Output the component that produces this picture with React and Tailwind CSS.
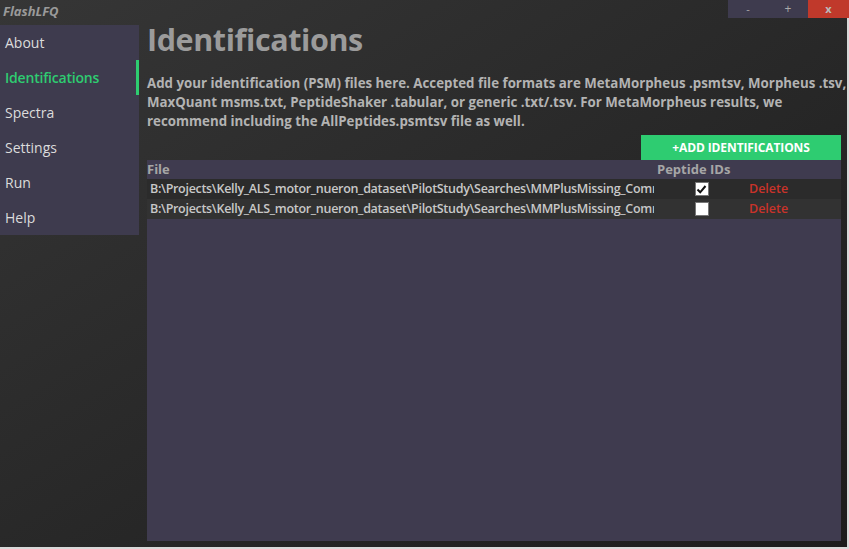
import React from 'react';

const navItems = ['About', 'Identifications', 'Spectra', 'Settings', 'Run', 'Help'];

const files = [
  { path: 'B:\\Projects\\Kelly_ALS_motor_nueron_dataset\\PilotStudy\\Searches\\MMPlusMissing_CommonFixedVariable\\AllPSMs.psmtsv', peptides: true },
  { path: 'B:\\Projects\\Kelly_ALS_motor_nueron_dataset\\PilotStudy\\Searches\\MMPlusMissing_CommonFixedVariable\\AllPeptides.psmtsv', peptides: false },
];

const Checkbox = ({ checked }) => (
  <div className="w-[14px] h-[14px] bg-white border border-[#777] flex items-center justify-center">
    {checked && (
      <svg width="11" height="11" viewBox="0 0 11 11">
        <path d="M1.5 5.5 L4.2 8.3 L9.5 2" fill="none" stroke="#111" strokeWidth="2" />
      </svg>
    )}
  </div>
);

export default function App() {
  return (
    <div className="w-[849px] h-[549px] bg-[#d9d9d9] font-['Open_Sans',sans-serif]">
      <div className="w-[847px] h-[547px] bg-gradient-to-br from-[#363636] to-[#1c1c1c] flex flex-col">
        {/* title bar */}
        <div className="h-[25px] flex items-start justify-between">
          <div className="pl-[3px] pt-[3px] text-[13px] leading-[17px] font-bold italic text-[#9a9a9a]">FlashLFQ</div>
          <div className="flex h-[18px] mr-[-2px]">
            <div className="w-[40px] bg-[#3e3b4e] text-[#aaa] text-[11px] flex items-center justify-center">-</div>
            <div className="w-[40px] bg-[#3e3b4e] text-[#aaa] text-[12px] flex items-center justify-center">+</div>
            <div className="w-[41px] bg-[#c0392b] text-[#bbb] text-[11px] font-bold flex items-center justify-center">x</div>
          </div>
        </div>

        <div className="flex flex-1 min-h-0">
          {/* sidebar */}
          <div className="w-[139px] self-start h-[210px] bg-[#3e3b4e] flex flex-col">
            {navItems.map((item) => {
              const active = item === 'Identifications';
              return (
                <div
                  key={item}
                  className={`h-[35px] flex items-center pl-[5px] text-[14px] ${
                    active ? 'text-[#2ecc71] font-semibold border-r-[3px] border-[#2ecc71] tracking-[-0.2px]' : 'text-[#dcdcdc]'
                  }`}
                >
                  {item}
                </div>
              );
            })}
          </div>

          {/* main */}
          <div className="flex-1 pl-[8px] pr-[6px] pb-[6px] flex flex-col min-w-0">
            <h1 className="text-[30.5px] leading-[28px] font-bold text-[#9b9b9b] tracking-[-0.4px]">Identifications</h1>
            <p className="mt-[21px] mr-[-6px] text-[13.3px] leading-[19px] font-bold text-[#b3b3b3] tracking-[0px]">
              Add your identification (PSM) files here. Accepted file formats are MetaMorpheus .psmtsv, Morpheus .tsv, MaxQuant msms.txt, PeptideShaker .tabular, or generic .txt/.tsv. For MetaMorpheus results, we recommend including the AllPeptides.psmtsv file as well.
            </p>
            <div className="flex justify-end mt-[4px]">
              <button className="w-[200px] h-[25px] bg-[#2ecc71] text-white text-[12px] font-bold tracking-[-0.1px]">
                +ADD IDENTIFICATIONS
              </button>
            </div>
            <div className="flex-1 bg-[#3f3b4f] flex flex-col">
              <div className="h-[19px] flex items-center text-[13px] font-bold text-[#a6a6a6]">
                <div className="w-[510px]">File</div>
                <div>Peptide IDs</div>
              </div>
              {files.map((f, i) => (
                <div
                  key={i}
                  className={`h-[20px] flex items-center ${i % 2 === 0 ? 'bg-[#2b2b2b]' : 'bg-[#323232]'}`}
                >
                  <div className="w-[507px] shrink-0 pl-[3px] text-[12.5px] font-semibold text-[#c8c8c8] whitespace-nowrap overflow-hidden tracking-[-0.3px]">{f.path}</div>
                  <div className="w-[95px] shrink-0 flex justify-center">
                    <Checkbox checked={f.peptides} />
                  </div>
                  <div className="text-[#c9332a] text-[12.5px] font-semibold">Delete</div>
                </div>
              ))}
            </div>
          </div>
        </div>
      </div>
    </div>
  );
}
